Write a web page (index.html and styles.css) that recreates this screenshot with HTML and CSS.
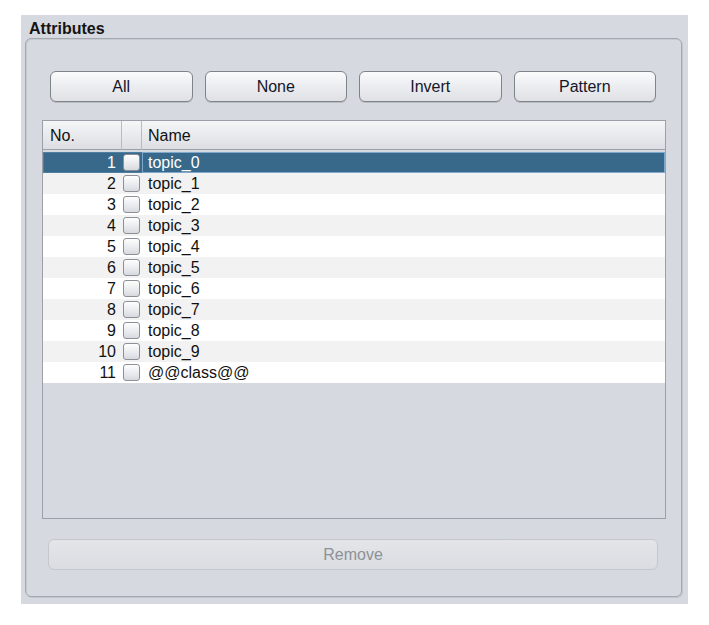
FILE: index.html
```html
<!DOCTYPE html>
<html>
<head>
<meta charset="utf-8">
<link rel="stylesheet" href="styles.css">
</head>
<body>
<div class="panel">
  <div class="title">Attributes</div>
  <div class="group">
    <div class="btn-row">
      <button class="btn">All</button>
      <button class="btn">None</button>
      <button class="btn">Invert</button>
      <button class="btn">Pattern</button>
    </div>
    <div class="table">
      <div class="thead">
        <div class="th th-no">No.</div>
        <div class="th th-chk"></div>
        <div class="th th-name">Name</div>
      </div>
      <div class="tbody">
        <div class="tr sel"><div class="td no">1</div><div class="td chk"><span class="box"></span></div><div class="td name">topic_0</div></div>
        <div class="tr alt"><div class="td no">2</div><div class="td chk"><span class="box"></span></div><div class="td name">topic_1</div></div>
        <div class="tr"><div class="td no">3</div><div class="td chk"><span class="box"></span></div><div class="td name">topic_2</div></div>
        <div class="tr alt"><div class="td no">4</div><div class="td chk"><span class="box"></span></div><div class="td name">topic_3</div></div>
        <div class="tr"><div class="td no">5</div><div class="td chk"><span class="box"></span></div><div class="td name">topic_4</div></div>
        <div class="tr alt"><div class="td no">6</div><div class="td chk"><span class="box"></span></div><div class="td name">topic_5</div></div>
        <div class="tr"><div class="td no">7</div><div class="td chk"><span class="box"></span></div><div class="td name">topic_6</div></div>
        <div class="tr alt"><div class="td no">8</div><div class="td chk"><span class="box"></span></div><div class="td name">topic_7</div></div>
        <div class="tr"><div class="td no">9</div><div class="td chk"><span class="box"></span></div><div class="td name">topic_8</div></div>
        <div class="tr alt"><div class="td no">10</div><div class="td chk"><span class="box"></span></div><div class="td name">topic_9</div></div>
        <div class="tr"><div class="td no">11</div><div class="td chk"><span class="box"></span></div><div class="td name">@@class@@</div></div>
      </div>
    </div>
    <button class="remove" disabled>Remove</button>
  </div>
</div>
</body>
</html>
```

FILE: styles.css
```css
* { box-sizing: border-box; }

body {
  margin: 0;
  background: #ffffff;
  font-family: "Liberation Sans", Arial, sans-serif;
  font-size: 16px;
  color: #111;
}

.panel {
  margin: 15px 0 0 21px;
  width: 667px;
  height: 589px;
  background: #d6d9df;
  padding: 0 6px 7px 4px;
  display: flex;
  flex-direction: column;
}

.title {
  height: 23px;
  padding: 5px 0 0 4px;
  font-weight: bold;
  font-size: 16px;
  line-height: 18px;
  color: #141414;
}

.group {
  flex: 1;
  border: 1px solid #a4a8b0;
  border-radius: 6px;
  box-shadow: inset 1px 1px 0 #c6c9cf, 1px 1px 0 #c2c5cb;
  display: flex;
  flex-direction: column;
  padding: 32px 0 0 0;
}

.btn-row {
  display: grid;
  grid-template-columns: repeat(4, 1fr);
  column-gap: 12px;
  padding: 0 25px 0 24px;
}

.btn {
  height: 31px;
  border: 1px solid #7f838a;
  border-radius: 6px;
  background: linear-gradient(#fbfbfc 0%, #eceef1 45%, #dfe1e5 100%);
  box-shadow: 0 1px 0 #b9bcc2;
  font-family: "Liberation Sans", Arial, sans-serif;
  font-size: 16px;
  color: #161629;
  padding: 1px 0 0 0;
}

.table {
  margin: 18px 15px 0 16px;
  height: 399px;
  border: 1px solid #9ba0a8;
  background: #d6d9df;
  display: flex;
  flex-direction: column;
}

.thead {
  display: grid;
  grid-template-columns: 79px 20px 1fr;
  height: 29px;
  background: linear-gradient(#f5f6f8, #dcdee3);
  border-bottom: 1px solid #9da1a8;
}

.th {
  line-height: 29px;
  color: #111;
}

.th-no { padding-left: 7px; border-right: 1px solid #b7bbc2; }
.th-chk { border-right: 1px solid #b7bbc2; }
.th-name { padding-left: 6px; }

.tbody {
  display: flex;
  flex-direction: column;
  padding-top: 2px;
}

.tr {
  display: grid;
  grid-template-columns: 79px 20px 1fr;
  height: 21px;
  background: #ffffff;
  line-height: 21px;
}

.tr.alt { background: #f2f2f2; }

.tr.sel {
  background: #39698a;
  color: #ffffff;
  box-shadow: inset 0 0 0 1px #4f7ea3;
}

.tr.sel .name {
  box-shadow: inset 0 0 0 1px #7fa8cc;
}

.td.no {
  text-align: right;
  padding-right: 6px;
}

.td.chk {
  display: flex;
  align-items: center;
  padding-left: 1px;
}

.box {
  width: 17px;
  height: 17px;
  border: 1px solid #8c9096;
  border-radius: 3px;
  background: linear-gradient(#fefefe, #e4e6ea 70%, #d6d9de);
}

.td.name {
  padding-left: 6px;
}

.remove {
  margin: 20px 23px 0 22px;
  height: 31px;
  border: 1px solid #c4c7cd;
  border-radius: 6px;
  background: linear-gradient(#e3e5e9, #d9dce1);
  font-family: "Liberation Sans", Arial, sans-serif;
  font-size: 16px;
  color: #8e9196;
  padding: 0;
}
```
